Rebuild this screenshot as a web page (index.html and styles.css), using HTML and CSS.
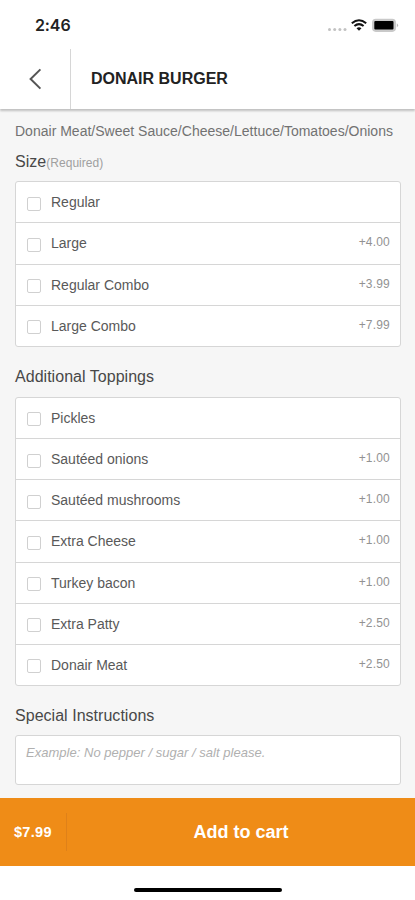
FILE: index.html
```html
<!DOCTYPE html>
<html lang="en">
<head>
<meta charset="utf-8">
<title>Donair Burger</title>
<link rel="stylesheet" href="styles.css">
</head>
<body>
<div class="screen">
  <div class="status">
    <span class="time">2:46</span>
    <svg class="indicators" width="72" height="16" viewBox="0 0 72 16">
      <g fill="#c2c2c2"><circle cx="2.5" cy="12.4" r="1.5"/><circle cx="7.7" cy="12.4" r="1.5"/><circle cx="12.9" cy="12.4" r="1.5"/><circle cx="18" cy="12.4" r="1.5"/></g>
      <g fill="none" stroke="#111" stroke-width="2"><path d="M24.8 6.2Q32 0.2 39.2 6.2"/><path d="M27.4 9Q32 5.2 36.6 9"/></g>
      <path d="M29.5 11.2Q32 9.4 34.5 11.2L32 13.7Z" fill="#111"/>
      <rect x="45" y="1.7" width="24" height="13.2" rx="3.8" fill="#c9c9c9"/>
      <rect x="47.3" y="4" width="19.2" height="8.6" rx="1" fill="#000"/>
      <path d="M69.8 6.2Q72.4 8.3 69.8 10.4Z" fill="#b9b9b9"/>
    </svg>
  </div>
  <header class="header">
    <div class="back">
      <svg width="14" height="22" viewBox="0 0 14 22"><path d="M12.4 1.4L2.6 11L12.4 20.6" fill="none" stroke="#555" stroke-width="2"/></svg>
    </div>
    <h1 class="title">DONAIR BURGER</h1>
  </header>
  <main class="content">
    <p class="desc">Donair Meat/Sweet Sauce/Cheese/Lettuce/Tomatoes/Onions</p>
    <h2 class="heading size">Size<small>(Required)</small></h2>
    <ul class="list">
      <li><i class="box"></i><span class="name">Regular</span></li>
      <li><i class="box"></i><span class="name">Large</span><span class="price">+4.00</span></li>
      <li><i class="box"></i><span class="name">Regular Combo</span><span class="price">+3.99</span></li>
      <li><i class="box"></i><span class="name">Large Combo</span><span class="price">+7.99</span></li>
    </ul>
    <h2 class="heading toppings">Additional Toppings</h2>
    <ul class="list">
      <li><i class="box"></i><span class="name">Pickles</span></li>
      <li><i class="box"></i><span class="name">Sautéed onions</span><span class="price">+1.00</span></li>
      <li><i class="box"></i><span class="name">Sautéed mushrooms</span><span class="price">+1.00</span></li>
      <li><i class="box"></i><span class="name">Extra Cheese</span><span class="price">+1.00</span></li>
      <li><i class="box"></i><span class="name">Turkey bacon</span><span class="price">+1.00</span></li>
      <li><i class="box"></i><span class="name">Extra Patty</span><span class="price">+2.50</span></li>
      <li><i class="box"></i><span class="name">Donair Meat</span><span class="price">+2.50</span></li>
    </ul>
    <h2 class="heading special">Special Instructions</h2>
    <div class="note">Example: No pepper / sugar / salt please.</div>
  </main>
  <footer class="cart">
    <span class="total">$7.99</span>
    <span class="add">Add to cart</span>
  </footer>
  <div class="home"><div class="bar"></div></div>
</div>
</body>
</html>
```

FILE: styles.css
```css
* { box-sizing: border-box; margin: 0; padding: 0; }
body { font-family: "Liberation Sans", Arial, sans-serif; background: #fff; }
.screen { width: 415px; height: 900px; display: flex; flex-direction: column; overflow: hidden; }
.status { height: 49px; flex: none; padding: 17px 16px 0 35px; display: flex; justify-content: space-between; }
.time { font: 600 16px/17px Inter, sans-serif; letter-spacing: -0.1px; color: #222; }
.header { height: 60px; flex: none; display: flex; background: #fff; box-shadow: 0 2px 2px rgba(0,0,0,.22); z-index: 1; }
.back { width: 71px; border-right: 1px solid #d6d6d6; padding: 19px 0 0 28px; }
.title { font-size: 16px; line-height: 18px; color: #222; padding: 21px 0 0 20px; }
.content { height: 689px; flex: none; background: #f6f6f6; padding: 0 14px 0 15px; }
.desc { height: 41px; padding-top: 14px; font-size: 14px; line-height: 17px; letter-spacing: 0.01px; color: #727272; white-space: nowrap; }
.heading { font-size: 16px; line-height: 20px; font-weight: 400; color: #484848; letter-spacing: 0.03px; }
.heading small { font-size: 12px; color: #a0a0a0; }
.size { height: 31.2px; padding-top: 2px; }
.toppings { height: 50px; padding-top: 20px; }
.special { height: 49px; padding-top: 20px; }
.list { list-style: none; border: 1px solid #d6d6d6; border-radius: 3px; background: #fff; }
.list li { height: 41.2px; display: flex; align-items: center; padding: 0 10px 0 11px; border-bottom: 1px solid #d6d6d6; }
.list li:last-child { border-bottom: 0; height: 40px; }
.box { width: 14px; height: 14px; border: 1px solid #d0d0d0; border-radius: 2px; margin-top: 3px; }
.name { margin-left: 10px; font-size: 14px; line-height: 20px; color: #595959; flex: 1; }
.price { font-size: 12px; line-height: 20px; letter-spacing: 0.2px; margin-bottom: 2px; color: #929292; }
.note { height: 50px; border: 1px solid #d6d6d6; border-radius: 3px; background: #fff; padding: 8px 10px; font-size: 13px; line-height: 18px; letter-spacing: 0.02px; font-style: italic; color: #b0b0b0; }
.cart { height: 68px; flex: none; background: #ef8c17; color: #fff; display: flex; align-items: center; font-weight: 700; }
.total { width: 67px; height: 38px; line-height: 38px; padding-left: 14px; font-size: 14.5px; letter-spacing: 0.3px; border-right: 1px solid #df8119; }
.add { flex: 1; text-align: center; font-size: 18px; padding-top: 1px; }
.home { height: 34px; padding-top: 22px; display: flex; justify-content: center; }
.bar { width: 148px; height: 4px; border-radius: 2px; background: #000; }
```
